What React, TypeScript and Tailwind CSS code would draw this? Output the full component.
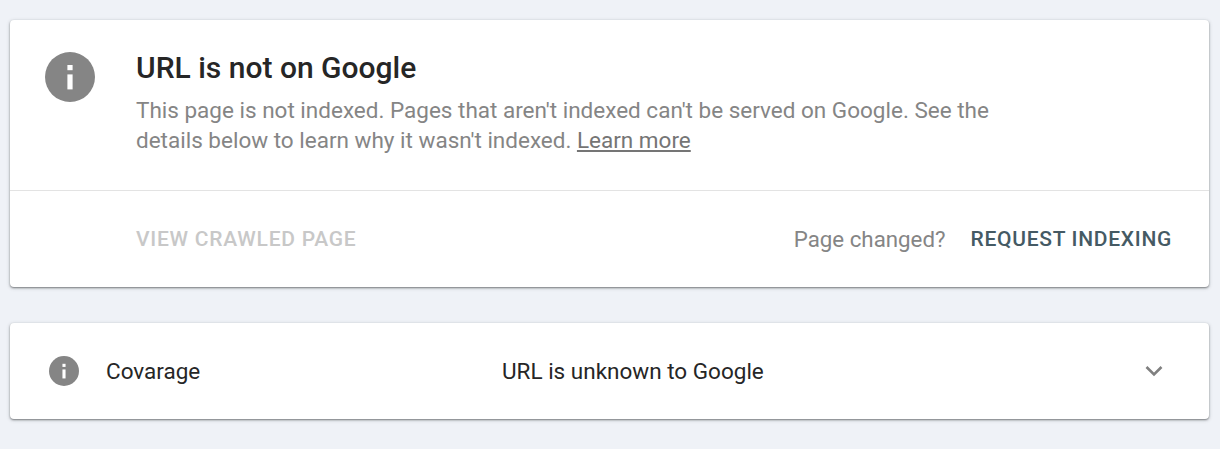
import React from "react";

function InfoIcon({ className }: { className: string }) {
  return (
    <svg viewBox="0 0 50 50" className={className}>
      <circle cx="25" cy="25" r="25" fill="#858585" />
      <rect x="22.4" y="22.4" width="5.2" height="15" fill="#fff" />
      <rect x="22.4" y="13" width="5.2" height="5.2" fill="#fff" />
    </svg>
  );
}

export default function App() {
  return (
    <div className="min-h-[449px] bg-[#eff2f7] px-[10px] pt-5 pb-[30px] font-['Roboto',sans-serif]">
      <section className="h-[267px] w-[1199px] rounded-[4px] bg-white shadow-[0_1px_2px_rgba(60,64,67,0.6),0_1px_4px_rgba(60,64,67,0.2)] flex flex-col">
        <div className="h-[171px] border-b border-[#e3e3e3] flex pl-[35px] pt-[32px]">
          <InfoIcon className="w-[50px] h-[50px] shrink-0" />
          <div className="ml-[41px] w-[880px]">
            <h1 className="text-[30px] leading-[32px] font-medium text-[#262626]">URL is not on Google</h1>
            <div className="mt-[11px] text-[22.5px] leading-[30px] text-[#858585]">
              <p>This page is not indexed. Pages that aren't indexed can't be served on Google. See the</p>
              <p className="flex gap-[5.5px]">
                <span>details below to learn why it wasn't indexed.</span>
                <a className="underline text-[#757575]">Learn more</a>
              </p>
            </div>
          </div>
        </div>
        <div className="flex-1 flex items-center justify-between pl-[126px] pr-[37px] pt-[2px]">
          <span className="text-[21px] font-medium tracking-[0.75px] text-[#c8c8c8]">VIEW CRAWLED PAGE</span>
          <div className="flex items-center gap-[25px]">
            <span className="text-[22.3px] text-[#858585]">Page changed?</span>
            <span className="text-[21px] font-medium tracking-[0.7px] text-[#455a64]">REQUEST INDEXING</span>
          </div>
        </div>
      </section>
      <section className="mt-9 h-[96px] w-[1199px] rounded-[4px] bg-white shadow-[0_1px_2px_rgba(60,64,67,0.6),0_1px_4px_rgba(60,64,67,0.2)] flex items-center pl-[39px] pr-[45px]">
        <InfoIcon className="w-[30px] h-[30px] shrink-0" />
        <span className="ml-[27px] w-[396px] pt-[2px] text-[22.5px] text-[#262626]">Covarage</span>
        <span className="flex-1 pt-[2px] text-[22.5px] text-[#262626]">URL is unknown to Google</span>
        <svg viewBox="0 0 20 14" className="w-[20px] h-[14px]">
          <path d="M2.5 3 L10 10.5 L17.5 3" fill="none" stroke="#808080" strokeWidth="2.6" />
        </svg>
      </section>
    </div>
  );
}
